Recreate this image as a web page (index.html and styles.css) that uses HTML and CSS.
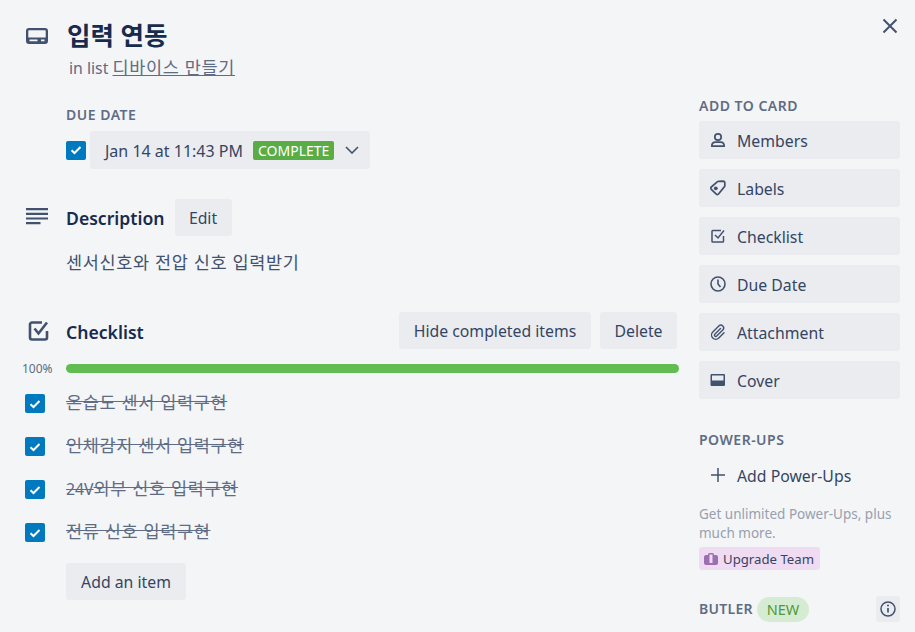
FILE: index.html
```html
<!DOCTYPE html>
<html lang="ko">
<head>
<meta charset="utf-8">
<title>입력 연동</title>
<link rel="stylesheet" href="styles.css">
</head>
<body>
<div class="modal">
  <button class="close" aria-label="Close">
    <svg viewBox="0 0 16 16" width="16" height="16"><path d="M1.500 1.500l13 13M14.500 1.500l-13 13" fill="none" stroke="#42526e" stroke-width="2"/></svg>
  </button>
  <header class="row head">
    <div class="gutter">
      <svg class="ic-title" viewBox="0 0 22 16" width="22" height="16"><path fill-rule="evenodd" fill="#42526e" d="M3 0h16a3 3 0 0 1 3 3v10a3 3 0 0 1-3 3H3a3 3 0 0 1-3-3V3a3 3 0 0 1 3-3zm0 2.300a.7.7 0 0 0-.7.7v6.500h17.400V3a.7.7 0 0 0-.7-.7H3zM3.500 11.500v1.700h8v-1.700h-8zm11.500 0v1.700h3.500v-1.700H15z"/></svg>
    </div>
    <div class="body">
      <h1 class="title">입력 연동</h1>
      <p class="sub">in list <a class="sub-link ko">디바이스 만들기</a></p>
    </div>
  </header>
  <div class="columns">
    <main class="main">
      <section class="due">
        <h3 class="label">DUE DATE</h3>
        <div class="due-row">
          <span class="check"><svg viewBox="0 0 12 10" width="12" height="10"><path d="M1.500 5.200l3 2.800L10.500 2" fill="none" stroke="#fff" stroke-width="2"/></svg></span>
          <button class="btn due-btn"><span class="due-text">Jan 14 at 11:43 PM</span><span class="complete">COMPLETE</span>
            <svg class="chev" viewBox="0 0 14 8" width="14" height="8"><path d="M1 1l6 6 6-6" fill="none" stroke="#42526e" stroke-width="1.600"/></svg>
          </button>
        </div>
      </section>
      <section class="row desc">
        <div class="gutter">
          <svg viewBox="0 0 22 17" width="22" height="17"><path fill="#42526e" d="M0 0h22v2.200H0zM0 4.700h22v2.200H0zM0 9.400h22v2.200H0zM0 14.100h14.500v2.200H0z"/></svg>
        </div>
        <div class="body">
          <div class="sec-head">
            <h2 class="sec-title">Description</h2>
            <button class="btn edit">Edit</button>
          </div>
          <p class="desc-text ko">센서신호와 전압 신호 입력받기</p>
        </div>
      </section>
      <section class="row chk">
        <div class="gutter">
          <svg viewBox="0 0 21 20" width="21" height="20"><path fill="none" stroke="#42526e" stroke-width="2.600" stroke-linejoin="round" d="M19 10v6.500a2 2 0 0 1-2 2H4a2 2 0 0 1-2-2V3.500a2 2 0 0 1 2-2h10"/><path fill="none" stroke="#42526e" stroke-width="2.600" d="M6.500 7.500l4 5 8.500-11"/></svg>
        </div>
        <div class="body">
          <div class="sec-head chk-head">
            <h2 class="sec-title">Checklist</h2>
            <div class="chk-actions">
              <button class="btn hide-btn">Hide completed items</button>
              <button class="btn delete-btn">Delete</button>
            </div>
          </div>
        </div>
      </section>
      <div class="progress">
        <span class="pct">100%</span>
        <div class="bar"></div>
      </div>
      <ul class="items">
        <li class="item"><span class="check"><svg viewBox="0 0 12 10" width="12" height="10"><path d="M1.500 5.200l3 2.800L10.500 2" fill="none" stroke="#fff" stroke-width="2"/></svg></span><s class="item-text"><span class="ko">온습도 센서 입력구현</span></s></li>
        <li class="item"><span class="check"><svg viewBox="0 0 12 10" width="12" height="10"><path d="M1.500 5.200l3 2.800L10.500 2" fill="none" stroke="#fff" stroke-width="2"/></svg></span><s class="item-text"><span class="ko">인체감지 센서 입력구현</span></s></li>
        <li class="item"><span class="check"><svg viewBox="0 0 12 10" width="12" height="10"><path d="M1.500 5.200l3 2.800L10.500 2" fill="none" stroke="#fff" stroke-width="2"/></svg></span><s class="item-text">24V<span class="ko">외부 신호 입력구현</span></s></li>
        <li class="item"><span class="check"><svg viewBox="0 0 12 10" width="12" height="10"><path d="M1.500 5.200l3 2.800L10.500 2" fill="none" stroke="#fff" stroke-width="2"/></svg></span><s class="item-text"><span class="ko">전류 신호 입력구현</span></s></li>
      </ul>
      <button class="btn add-item">Add an item</button>
    </main>
    <aside class="side">
      <h3 class="label side-label">ADD TO CARD</h3>
      <div class="side-list">
        <button class="btn side-btn"><span class="side-ic"><svg viewBox="0 0 16 16" width="16" height="16"><circle cx="8" cy="5" r="3.200" fill="none" stroke="#42526e" stroke-width="1.700"/><path d="M1.800 14.200c0-2.800 2-4 3.700-4h5c1.700 0 3.700 1.200 3.700 4z" fill="none" stroke="#42526e" stroke-width="1.700" stroke-linejoin="round"/></svg></span><span class="side-text">Members</span></button>
        <button class="btn side-btn"><span class="side-ic"><svg viewBox="0 0 16 16" width="16" height="16"><path d="M1.300 7L7.200 1.800a1.500 1.500 0 0 1 1-.4l4.800-.2a1.800 1.800 0 0 1 1.800 1.800v2.800a1.500 1.500 0 0 1-.5 1.100L8.300 14.200a1.500 1.500 0 0 1-2 0L1.300 9.300a1.500 1.500 0 0 1 0-2.300z" fill="none" stroke="#42526e" stroke-width="1.700" stroke-linejoin="round"/><circle cx="5.800" cy="8.300" r="1.900" fill="#42526e"/></svg></span><span class="side-text">Labels</span></button>
        <button class="btn side-btn"><span class="side-ic"><svg viewBox="0 0 16 16" width="16" height="16"><path d="M13.500 8v5.200a.8.8 0 0 1-.8.8H2.800a.8.8 0 0 1-.8-.8V3.300a.8.8 0 0 1 .8-.8H11" fill="none" stroke="#42526e" stroke-width="1.500"/><path d="M5 7l3 3 6-7.500" fill="none" stroke="#42526e" stroke-width="1.500"/></svg></span><span class="side-text">Checklist</span></button>
        <button class="btn side-btn"><span class="side-ic"><svg viewBox="0 0 16 16" width="16" height="16"><circle cx="8" cy="8" r="7" fill="none" stroke="#42526e" stroke-width="1.600"/><path d="M8 3.500V8l2.500 3" fill="none" stroke="#42526e" stroke-width="1.600"/></svg></span><span class="side-text">Due Date</span></button>
        <button class="btn side-btn"><span class="side-ic"><svg viewBox="0 0 16 16" width="16" height="16"><path d="M10.500 4.500L4.800 10.200a1.300 1.300 0 0 0 1.900 1.900L12.800 6a2.800 2.800 0 0 0-4-4L2.800 8a4.200 4.200 0 0 0 6 6L14 8.800" fill="none" stroke="#42526e" stroke-width="1.400" stroke-linecap="round"/></svg></span><span class="side-text">Attachment</span></button>
        <button class="btn side-btn"><span class="side-ic"><svg viewBox="0 0 16 16" width="16" height="16"><path fill-rule="evenodd" fill="#42526e" d="M1.500 2h12.500a1 1 0 0 1 1 1v10a1 1 0 0 1-1 1H1.500a1 1 0 0 1-1-1V3a1 1 0 0 1 1-1zm.5 1.500v5h11.500v-5H2z"/></svg></span><span class="side-text">Cover</span></button>
      </div>
      <h3 class="label side-label power">POWER-UPS</h3>
      <button class="btn side-btn plain"><span class="side-ic"><svg viewBox="0 0 16 16" width="16" height="16"><path d="M8 1v14M1 8h14" fill="none" stroke="#42526e" stroke-width="1.500"/></svg></span><span class="side-text">Add Power-Ups</span></button>
      <p class="note">Get unlimited Power-Ups, plus much more.</p>
      <span class="upgrade"><svg viewBox="0 0 14 12" width="14" height="12"><path fill="#9c6fb0" fill-rule="evenodd" d="M4 2V1.500A1.500 1.500 0 0 1 5.500 0h3A1.500 1.500 0 0 1 10 1.500V2h2a2 2 0 0 1 2 2v6a2 2 0 0 1-2 2H2a2 2 0 0 1-2-2V4a2 2 0 0 1 2-2h2zm1.500-.5V10h3V1.500h-3z"/></svg><span class="upgrade-text">Upgrade Team</span></span>
      <div class="butler">
        <h3 class="label butler-label">BUTLER</h3>
        <span class="new">NEW</span>
        <button class="info" aria-label="Info"><svg viewBox="0 0 16 16" width="16" height="16"><circle cx="8" cy="8" r="7" fill="none" stroke="#42526e" stroke-width="1.500"/><path d="M8 7v4.500" stroke="#42526e" stroke-width="1.700"/><circle cx="8" cy="4.600" r="1" fill="#42526e"/></svg></button>
      </div>
    </aside>
  </div>
</div>
</body>
</html>
```

FILE: styles.css
```css
* { box-sizing: border-box; }
html, body { margin: 0; height: 100%; }
body {
  background: #f4f5f7;
  color: #172b4d;
  font-family: "Noto Sans", "Noto Sans CJK KR", sans-serif;
  font-size: 15.800px;
  overflow: hidden;
}
h1, h2, h3, p, ul { margin: 0; padding: 0; }
.ko { font-size: 17.500px; letter-spacing: .66px; }
.modal { position: relative; height: 632px; padding: 0 15px 0 26px; overflow: hidden; }
.close {
  position: absolute; top: 18px; right: 17px;
  width: 16px; height: 16px; padding: 0; border: 0; background: none; display: flex;
}
.row { display: flex; }
.gutter { width: 40px; flex: none; display: flex; }
.body { flex: 1; min-width: 0; }

.btn {
  display: flex; align-items: center; justify-content: center;
  height: 37px; padding: 0 14px; border: 0; border-radius: 3px;
  background: #ebecf0; font: inherit; white-space: nowrap;
  color: #344563;
}
.label { font-size: 14px; font-weight: 600; letter-spacing: .5px; color: #5e6c84; line-height: 20px; }

.head { padding-top: 17px; height: 98px; }
.ic-title { margin-top: 11px; }
.title { font-size: 25.500px; font-weight: 700; line-height: 36px; color: #172b4d; padding-left: 1px; }
.sub { line-height: 26px; color: #5e6c84; margin-top: 1px; padding-left: 3px; }
.sub-link { text-decoration: underline; color: #5e6c84; }

.columns { display: flex; }
.main { width: 653px; flex: none; }
.side { width: 201px; margin-left: 20px; margin-top: -2px; }

.due { padding-left: 40px; padding-top: 7px; }
.due-row { display: flex; align-items: center; gap: 4px; margin-top: 6px; }
.check {
  width: 20px; height: 19px; flex: none; background: #0079bf; border-radius: 2px;
  display: flex; align-items: center; justify-content: center;
}
.due-btn { width: 280px; height: 38px; justify-content: flex-start; padding: 0 0 0 15px; }
.due-text { font-size: 16px; padding-top: 2px; }
.complete {
  background: #5aac44; color: #fff; font-size: 14px; line-height: 19px;
  padding: 0 5px; border-radius: 2px; margin-left: 10px; flex: none;
}
.chev { margin-left: 11px; flex: none; }

.desc { margin-top: 30px; }
.desc .gutter { padding-top: 9px; }
.sec-head { display: flex; align-items: center; }
.sec-title { font-size: 17.600px; font-weight: 600; color: #172b4d; line-height: 36px; padding-top: 1px; }
.edit { width: 57px; padding: 0; margin-left: 10px; }
.desc-text { line-height: 24px; color: #42526e; margin-top: 14px; }

.chk { margin-top: 38px; }
.chk .gutter { padding-top: 9px; padding-left: 2px; }
.chk-head { justify-content: space-between; }
.chk-actions { display: flex; gap: 9px; margin-right: 2px; margin-bottom: 2px; }
.hide-btn { width: 192px; padding: 0; }
.delete-btn { width: 77px; padding: 0; }

.progress { display: flex; align-items: center; margin-top: 12px; height: 10px; }
.pct { width: 40px; margin-left: -4px; font-size: 12px; color: #5e6c84; flex: none; margin-right: 4px; }
.bar { height: 9px; width: 613px; background: #61bd4f; border-radius: 5px; }

.items { list-style: none; margin-top: 9px; }
.item { display: flex; align-items: center; height: 43px; margin-left: -1px; }
.item-text { margin-left: 21px; margin-bottom: 5px; color: #5e6c84; text-decoration: line-through; }

.add-item { margin: 9px 0 0 40px; width: 120px; padding: 0; }

.side-label { font-size: 14px; }
.side-list { display: flex; flex-direction: column; gap: 10px; margin-top: 5px; }
.side-btn { justify-content: flex-start; width: 201px; height: 38px; padding: 0 0 0 11px; }
.side-ic { width: 27px; flex: none; display: flex; }
.side-text { padding-top: 2px; }
.power { margin-top: 31px; }
.plain { background: none; margin-top: 6px; }
.note { font-size: 13.500px; line-height: 19px; color: #97a0af; margin-top: 11px; }
.upgrade {
  display: inline-flex; align-items: center; gap: 5px; height: 23px; width: 121px; margin-top: 4px; padding-left: 5px;
  background: #efdcf3; border-radius: 3px; font-size: 13.200px; color: #344563;
}
.upgrade-text { padding-top: 1px; }
.butler { display: flex; align-items: center; margin-top: 26px; }
.butler-label { letter-spacing: .3px; }
.new {
  width: 52px; height: 25px; border-radius: 13px; background: #d6ecd2; color: #519839;
  font-size: 14.500px; display: flex; align-items: center; justify-content: center; margin-left: 4px;
}
.info {
  margin-left: auto; width: 24px; height: 26px; border: 0; padding: 0; background: #ebecf0; border-radius: 3px;
  display: flex; align-items: center; justify-content: center;
}
```
